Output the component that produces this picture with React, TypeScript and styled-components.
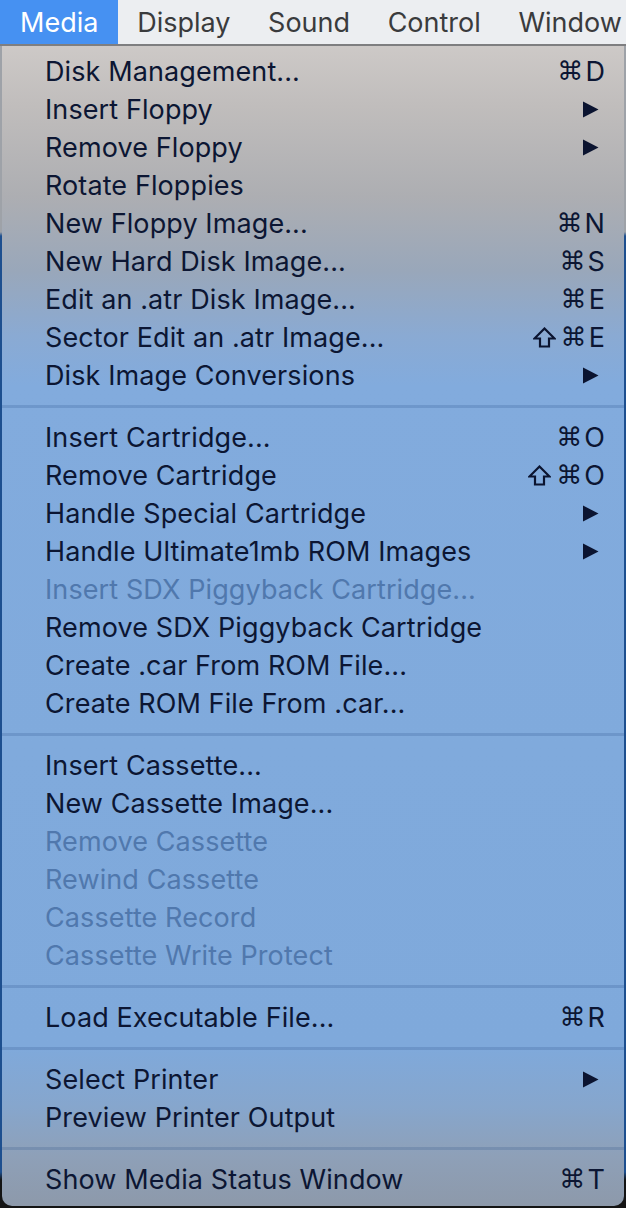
import React from "react";
import styled, { createGlobalStyle } from "styled-components";

const GlobalStyle = createGlobalStyle`
  html, body { margin: 0; padding: 0; background: #151515; }
  body { font-family: "Inter", "Noto Sans", "DejaVu Sans", sans-serif; }
  * { box-sizing: border-box; }
`;

const Screen = styled.div`
  width: 626px;
  height: 1208px;
  display: flex;
  flex-direction: column;
  overflow: hidden;
  background: linear-gradient(
    to bottom,
    #9ea2a8 0px,
    #9ea2a8 232px,
    #1d4f8f 236px,
    #1d4f8f 1172px,
    #141414 1180px
  );
`;

const MenuBar = styled.div`
  height: 46px;
  flex: none;
  display: flex;
  align-items: stretch;
  background: #eceef1;
  border-bottom: 2px solid #7e7e80;
`;

const BarItem = styled.div<{ $active?: boolean }>`
  display: flex;
  align-items: center;
  padding: 0 ${(p) => (p.$active ? "20px" : "18.8px")};
  font-size: 27px;
  color: ${(p) => (p.$active ? "#ffffff" : "#3a3b3d")};
  background: ${(p) => (p.$active ? "#4691f2" : "transparent")};
  white-space: nowrap;
`;

const Panel = styled.div`
  margin: 0 2px 0 2px;
  width: 622px;
  flex: none;
  padding: 6px 0 8px;
  border-radius: 0 0 10px 10px;
  background: linear-gradient(
    to bottom,
    #cdc9c7 0px,
    #c0bdbc 60px,
    #adaeb2 150px,
    #99a7ba 225px,
    #8aaad3 290px,
    #82abdd 340px,
    #80aadc 700px,
    #7fa9db 1000px,
    #86a6cd 1060px,
    #8ea0b8 1110px,
    #8d99aa 1161px
  );
  display: flex;
  flex-direction: column;
`;

const Row = styled.div<{ $disabled?: boolean }>`
  height: 38px;
  display: flex;
  align-items: center;
  justify-content: space-between;
  padding: 0 19px 0 43px;
  font-size: 27px;
  letter-spacing: 0.1px;
  color: ${(p) => (p.$disabled ? "#5078ad" : "#0c1633")};
  white-space: nowrap;
`;

const Label = styled.span``;

const Shortcut = styled.span`
  display: flex;
  align-items: center;
  gap: 2px;
  font-size: 27px;
`;

const Sym = styled.span`
  font-family: "DejaVu Sans", sans-serif;
  font-size: 26px;
`;

const Separator = styled.div`
  height: 24px;
  flex: none;
  display: flex;
  align-items: center;
  &::after {
    content: "";
    display: block;
    width: 100%;
    height: 3px;
    background: rgba(20, 60, 120, 0.18);
  }
`;

const Arrow = () => (
  <svg width="17" height="17" viewBox="0 0 17 17" style={{ marginRight: 6 }}>
    <path d="M1 0.5 L16.5 8.5 L1 16.5 Z" fill="#0b1430" />
  </svg>
);

const ShiftIcon = () => (
  <svg width="23" height="21" viewBox="0 0 23 21" style={{ marginRight: 3 }}>
    <path
      d="M11.5 1.5 L21.5 11.5 L16 11.5 L16 19.5 L7 19.5 L7 11.5 L1.5 11.5 Z"
      fill="none"
      stroke="#0b1430"
      strokeWidth="2.2"
      strokeLinejoin="miter"
    />
  </svg>
);

type Item =
  | { sep: true }
  | { label: string; key?: string; shift?: boolean; sub?: boolean; disabled?: boolean };

const items: Item[] = [
  { label: "Disk Management...", key: "D" },
  { label: "Insert Floppy", sub: true },
  { label: "Remove Floppy", sub: true },
  { label: "Rotate Floppies" },
  { label: "New Floppy Image...", key: "N" },
  { label: "New Hard Disk Image...", key: "S" },
  { label: "Edit an .atr Disk Image...", key: "E" },
  { label: "Sector Edit an .atr Image...", key: "E", shift: true },
  { label: "Disk Image Conversions", sub: true },
  { sep: true },
  { label: "Insert Cartridge...", key: "O" },
  { label: "Remove Cartridge", key: "O", shift: true },
  { label: "Handle Special Cartridge", sub: true },
  { label: "Handle Ultimate1mb ROM Images", sub: true },
  { label: "Insert SDX Piggyback Cartridge...", disabled: true },
  { label: "Remove SDX Piggyback Cartridge" },
  { label: "Create .car From ROM File..." },
  { label: "Create ROM File From .car..." },
  { sep: true },
  { label: "Insert Cassette..." },
  { label: "New Cassette Image..." },
  { label: "Remove Cassette", disabled: true },
  { label: "Rewind Cassette", disabled: true },
  { label: "Cassette Record", disabled: true },
  { label: "Cassette Write Protect", disabled: true },
  { sep: true },
  { label: "Load Executable File...", key: "R" },
  { sep: true },
  { label: "Select Printer", sub: true },
  { label: "Preview Printer Output" },
  { sep: true },
  { label: "Show Media Status Window", key: "T" },
];

export default function App() {
  return (
    <>
      <GlobalStyle />
      <Screen>
        <MenuBar>
          <BarItem $active>Media</BarItem>
          <BarItem>Display</BarItem>
          <BarItem>Sound</BarItem>
          <BarItem>Control</BarItem>
          <BarItem>Window</BarItem>
        </MenuBar>
        <Panel>
          {items.map((it, i) =>
            "sep" in it ? (
              <Separator key={i} />
            ) : (
              <Row key={i} $disabled={it.disabled}>
                <Label>{it.label}</Label>
                {it.sub ? (
                  <Arrow />
                ) : it.key ? (
                  <Shortcut>
                    {it.shift && <ShiftIcon />}
                    <Sym>⌘</Sym>
                    {it.key}
                  </Shortcut>
                ) : null}
              </Row>
            )
          )}
        </Panel>
      </Screen>
    </>
  );
}
